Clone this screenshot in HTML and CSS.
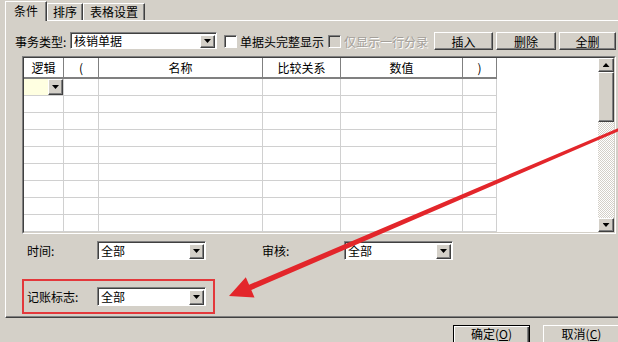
FILE: index.html
```html
<!DOCTYPE html>
<html lang="zh-CN">
<head>
  <meta charset="UTF-8" />
  <title>过滤条件</title>
  <link rel="stylesheet" href="styles.css">
</head>
<body>

  <!-- Tab strip -->
  <div class="tabs">
    <div class="tab active">条件</div>
    <div class="tab tab-sort">排序</div>
    <div class="tab tab-grid">表格设置</div>
  </div>

  <!-- Condition page -->
  <div class="panel">
    <div class="toolbar">
      <span class="type-label">事务类型:</span>
      <div class="combo combo-type">
        <span class="combo-text">核销单据</span>
        <span class="drop"><i class="arr-down"></i></span>
      </div>
      <span class="check"><i class="box"></i></span>
      <span class="check-text">单据头完整显示</span>
      <span class="check disabled"><i class="box"></i></span>
      <span class="check-text disabled">仅显示一行分录</span>
      <button class="btn btn-insert">插入</button>
      <button class="btn btn-delete">删除</button>
      <button class="btn btn-clear">全删</button>
    </div>

    <div class="grid">
      <div class="grid-inner">
        <table class="sheet">
          <colgroup>
            <col style="width:40px"><col style="width:35px"><col style="width:164px">
            <col style="width:78px"><col style="width:122px"><col style="width:34px">
          </colgroup>
          <thead>
            <tr><th>逻辑</th><th>(</th><th>名称</th><th>比较关系</th><th>数值</th><th>)</th></tr>
          </thead>
          <tbody>
            <tr>
              <td><div class="cell-edit"><span class="cell-value"></span><span class="cell-drop"><i class="arr-down"></i></span></div></td>
              <td></td><td></td><td></td><td></td><td></td>
            </tr>
            <tr><td></td><td></td><td></td><td></td><td></td><td></td></tr>
            <tr><td></td><td></td><td></td><td></td><td></td><td></td></tr>
            <tr><td></td><td></td><td></td><td></td><td></td><td></td></tr>
            <tr><td></td><td></td><td></td><td></td><td></td><td></td></tr>
            <tr><td></td><td></td><td></td><td></td><td></td><td></td></tr>
            <tr><td></td><td></td><td></td><td></td><td></td><td></td></tr>
            <tr><td></td><td></td><td></td><td></td><td></td><td></td></tr>
            <tr><td></td><td></td><td></td><td></td><td></td><td></td></tr>
          </tbody>
        </table>
        <div class="filler"></div>
        <div class="vscroll">
          <span class="sb-btn"><i class="arr-up"></i></span>
          <span class="sb-thumb"></span>
          <span class="sb-btn sb-down"><i class="arr-down"></i></span>
        </div>
      </div>
    </div>

    <div class="field-row">
      <span class="field-label">时间:</span>
      <div class="combo combo-field">
        <span class="combo-text">全部</span>
        <span class="drop"><i class="arr-down"></i></span>
      </div>
      <span class="field-label field-audit">审核:</span>
      <div class="combo combo-field">
        <span class="combo-text">全部</span>
        <span class="drop"><i class="arr-down"></i></span>
      </div>
    </div>

    <div class="field-row marked">
      <span class="field-label">记账标志:</span>
      <div class="combo combo-field">
        <span class="combo-text">全部</span>
        <span class="drop"><i class="arr-down"></i></span>
      </div>
    </div>
  </div>

  <!-- Dialog buttons -->
  <div class="footer">
    <button class="btn btn-footer default">确定(<u>O</u>)</button>
    <button class="btn btn-footer">取消(<u>C</u>)</button>
  </div>

  <!-- Annotation arrow drawn over the dialog -->
  <svg class="annotation" width="618" height="342" viewBox="0 0 618 342">
    <polygon fill="#e3262b"
      points="229,296 254.5,297.5 251.3,290 620.5,130.5 619.5,127.5 249.1,284.8 245.8,277.3" />
  </svg>

</body>
</html>
```

FILE: styles.css
```css
* {
  margin: 0; padding: 0;
  box-sizing: border-box;
}

html, body {
  width: 100%;
  height: 100%;
  overflow: hidden;
}

body {
  position: relative;
  padding-left: 5px;
  background: #d4d0c8;
  font-family: "Noto Sans CJK SC", "Liberation Sans", sans-serif;
  font-size: 12px;
  color: #000;
}

button {
  font: inherit;
  color: inherit;
}

/* tabs */
.tabs {
  display: flex;
  align-items: flex-end;
  height: 20px;
}

.tab {
  height: 17px;
  line-height: 15px;
  text-align: center;
  border: 1px solid;
  border-bottom: none;
  border-color: #fff #404040 transparent #fff;
  box-shadow: inset -1px 0 #808080;
}

.tab.active {
  position: relative;
  z-index: 1;
  width: 42px;
  height: 20px;
  line-height: 18px;
  margin-bottom: -1px;
  background: #d4d0c8;
}

.tab-sort {
  width: 36px;
}

.tab-grid {
  width: 62px;
}

/* page */
.panel {
  height: 298px;
  border-top: 1px solid #fff;
  border-left: 1px solid #fff;
  border-bottom: 1px solid #404040;
  box-shadow: inset 0 -1px #808080;
}

.toolbar {
  display: flex;
  align-items: center;
  height: 18px;
  margin: 11px 0 0 9px;
}

.toolbar > * {
  flex: none;
}

.type-label {
  width: 55px;
}

/* combobox */
.combo {
  display: flex;
  flex: none;
  align-items: center;
  background: #fff;
  border: 1px solid;
  border-color: #808080 #fff #fff #808080;
  box-shadow: inset 1px 1px #404040;
}

.combo-type {
  width: 147px;
  height: 17px;
  align-self: flex-start;
}

.combo-text {
  flex: 1;
  padding-left: 3px;
  line-height: 14px;
  white-space: nowrap;
}

.drop,
.cell-drop,
.sb-btn,
.sb-thumb {
  display: flex;
  align-items: center;
  justify-content: center;
  background: #d4d0c8;
  border: 1px solid;
  border-color: #fff #404040 #404040 #fff;
  box-shadow: inset -1px -1px #808080;
}

.drop {
  width: 15px;
  height: 13px;
  margin: 1px 1px 0 0;
}

.combo-field .drop {
  height: 15px;
}

.arr-down,
.arr-up {
  display: block;
  width: 7px;
  height: 4px;
  background: #000;
  clip-path: polygon(0 0, 100% 0, 50% 100%);
}

.arr-up {
  clip-path: polygon(50% 0, 100% 100%, 0 100%);
}

/* checkboxes */
.check {
  margin-left: 7px;
}

.check .box {
  display: block;
  width: 13px;
  height: 13px;
  background: #fff;
  border: 1px solid;
  border-color: #808080 #fff #fff #808080;
  box-shadow: inset 1px 1px #404040;
}

.check.disabled {
  margin-left: 4px;
}

.check.disabled .box {
  background: #d4d0c8;
}

.check-text {
  margin-left: 3px;
  width: 84px;
  white-space: nowrap;
}

.check-text.disabled {
  width: 87px;
  color: #a4a09a;
  text-shadow: 1px 1px #fff;
}

/* push buttons */
.btn {
  height: 18px;
  background: #d4d0c8;
  border: 1px solid;
  border-color: #fff #404040 #404040 #fff;
  box-shadow: inset -1px -1px #808080;
  text-align: center;
  align-self: flex-start;
}

.btn-insert {
  width: 59px;
  margin-left: 3px;
}

.btn-delete {
  width: 60px;
  margin-left: 3px;
}

.btn-clear {
  width: 57px;
  margin-left: 3px;
}

/* condition grid */
.grid {
  width: 594px;
  height: 178px;
  margin: 6px 0 0 16px;
  border: 1px solid;
  border-color: #808080 #fff #fff #808080;
}

.grid-inner {
  display: flex;
  height: 100%;
  background: #fff;
  border: 1px solid;
  border-color: #404040 #d4d0c8 #d4d0c8 #404040;
}

.sheet {
  table-layout: fixed;
  width: 473px;
  border-collapse: separate;
  border-spacing: 0;
  align-self: flex-start;
}

.sheet th {
  height: 21px;
  padding: 0;
  font-weight: normal;
  text-align: center;
  border-right: 1px solid #808080;
  border-bottom: 2px solid #808080;
}

.sheet td {
  height: 17px;
  padding: 0;
  border-right: 1px solid #d0d0d0;
  border-bottom: 1px solid #d0d0d0;
}

.cell-edit {
  display: flex;
  height: 16px;
}

.cell-value {
  flex: 1;
  background: #ffffe1;
}

.cell-drop {
  width: 15px;
}

.filler {
  flex: 1;
}

.vscroll {
  display: flex;
  flex-direction: column;
  width: 16px;
  background: repeating-conic-gradient(#fff 0 25%, #d4d0c8 0 50%) 0 0 / 2px 2px;
}

.sb-btn {
  height: 14px;
}

.sb-thumb {
  height: 50px;
}

.sb-down {
  margin-top: auto;
}

/* bottom filters */
.field-row {
  display: flex;
  align-items: center;
  height: 19px;
  margin: 7px 0 0 16px;
  padding-left: 5px;
}

.field-row > * {
  flex: none;
}

.field-label {
  width: 70px;
  white-space: nowrap;
}

.field-audit {
  width: 82px;
  margin-left: 56px;
}

.combo-field {
  width: 109px;
  height: 19px;
}

.marked {
  width: 193px;
  height: 35px;
  margin-top: 19px;
  padding-left: 3px;
  border: 2px solid #e3383b;
}

/* dialog buttons */
.footer {
  display: flex;
  gap: 13px;
  padding: 7px 0 0 448px;
}

.btn-footer {
  flex: none;
  width: 77px;
  height: 23px;
  padding-bottom: 6px;
  line-height: 14px;
  white-space: nowrap;
}

.btn-footer.default {
  border-color: #000;
  box-shadow: inset 1px 1px #fff, inset -1px -1px #404040, inset -2px -2px #808080;
}

/* annotation overlay */
.annotation {
  position: absolute;
  top: 0;
  left: 0;
}
```
